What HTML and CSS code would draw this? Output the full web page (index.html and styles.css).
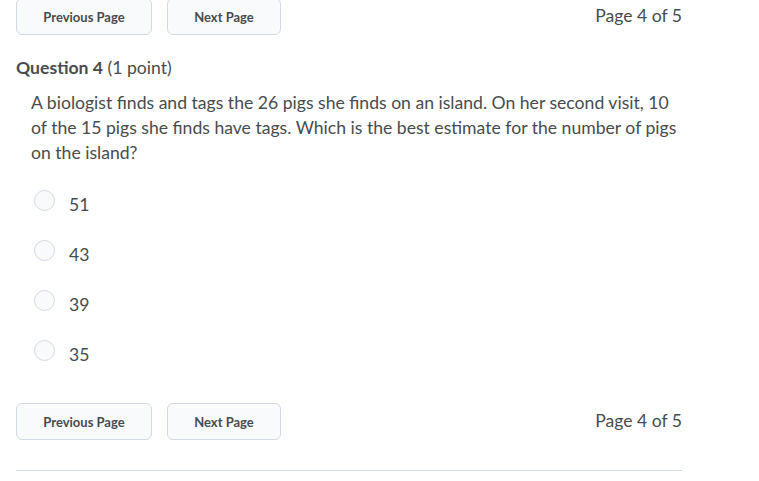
FILE: index.html
```html
<!DOCTYPE html>
<html>
<head>
<meta charset="utf-8">
<link rel="stylesheet" href="styles.css">
</head>
<body>
<div class="page">
  <div class="nav nav-top">
    <div class="buttons">
      <button class="btn btn-prev">Previous Page</button>
      <button class="btn btn-next">Next Page</button>
    </div>
    <div class="pageno">Page 4 of 5</div>
  </div>
  <h2 class="qtitle"><strong>Question 4</strong> (1 point)</h2>
  <div class="qbody">
    <p class="qtext">A biologist finds and tags the 26 pigs she finds on an island. On her second visit, 10 of the 15 pigs she finds have tags. Which is the best estimate for the number of pigs on the island?</p>
    <div class="options">
      <label class="opt"><span class="radio"></span><span class="lbl">51</span></label>
      <label class="opt"><span class="radio"></span><span class="lbl">43</span></label>
      <label class="opt"><span class="radio"></span><span class="lbl">39</span></label>
      <label class="opt"><span class="radio"></span><span class="lbl">35</span></label>
    </div>
  </div>
  <div class="nav nav-bottom">
    <div class="buttons">
      <button class="btn btn-prev">Previous Page</button>
      <button class="btn btn-next">Next Page</button>
    </div>
    <div class="pageno">Page 4 of 5</div>
  </div>
  <div class="rule"></div>
</div>
</body>
</html>
```
FILE: styles.css
```css
html, body {
  margin: 0;
  padding: 0;
  background: #ffffff;
}
body {
  font-family: Lato, "Open Sans", "Liberation Sans", sans-serif;
  color: #494c4e;
  overflow: hidden;
}
.page {
  width: 666px;
  margin-left: 16px;
}
.nav {
  display: flex;
  align-items: center;
  justify-content: space-between;
}
.nav-top {
  margin-top: -2px;
}
.nav-bottom {
  margin-top: 24px;
}
.buttons {
  display: flex;
  gap: 15px;
}
.btn {
  height: 37px;
  box-sizing: border-box;
  border: 1px solid #d3d9e3;
  border-radius: 6px;
  background: #f9fafb;
  font-family: Lato, "Open Sans", sans-serif;
  font-size: 13px;
  font-weight: 700;
  color: #494c4e;
  padding: 0;
}
.btn-prev { width: 136px; }
.btn-next { width: 114px; }
.pageno {
  font-size: 17.6px;
  color: #494c4e;
  line-height: 25px;
  margin-top: -3px;
}
.qtitle {
  margin: 20px 0 0 0;
  font-size: 17.6px;
  font-weight: 400;
  line-height: 25px;
  color: #494c4e;
}
.qtitle strong {
  font-weight: 700;
}
.qbody {
  padding-left: 15px;
}
.qtext {
  margin: 10px 0 0 0;
  font-size: 17.6px;
  line-height: 25px;
  width: 651px;
}
.options {
  margin-top: 14px;
  display: flex;
  flex-direction: column;
}
.opt {
  display: flex;
  align-items: center;
  height: 50px;
}
.radio {
  width: 21px;
  height: 21px;
  box-sizing: border-box;
  border: 1px solid #d3d9e3;
  border-radius: 50%;
  background: #f9fafb;
  margin-top: -8px;
  margin-left: 3px;
}
.lbl {
  margin-left: 14px;
  font-size: 17.6px;
  line-height: 25px;
}
.rule {
  margin-top: 30px;
  height: 1px;
  background: #d3d9e3;
}
```
